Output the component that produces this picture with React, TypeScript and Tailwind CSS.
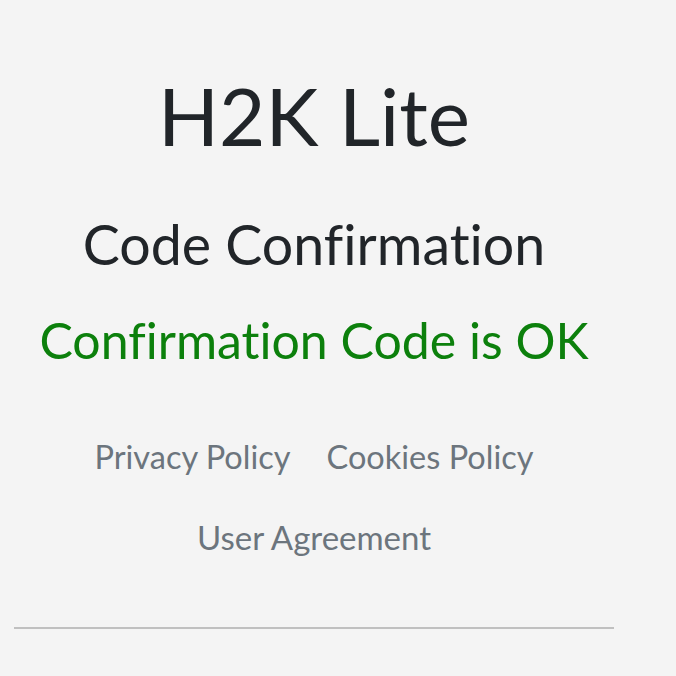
export default function App() {
  const font = { fontFamily: "Lato, 'Noto Sans', sans-serif" };
  return (
    <div className="min-h-[676px] w-full bg-[#f4f4f4] [font-variant-ligatures:none]" style={font}>
      <div className="ml-[14px] flex w-[600px] flex-col items-center pt-[67px]">
        <h1 className="text-[80px] leading-[96px] font-normal text-[#212529]">H2K Lite</h1>
        <h2 className="mt-[46px] text-[55.5px] leading-[70px] font-normal text-[#212529]">Code Confirmation</h2>
        <p className="mt-[33px] text-[50px] leading-[56px] text-[#0c800c]">Confirmation Code is OK</p>
        <div className="mt-[69px] flex gap-[36px] text-[32.5px] leading-[40px] text-[#6c757d]">
          <a>Privacy Policy</a>
          <a>Cookies Policy</a>
        </div>
        <a className="mt-[40px] text-[33px] leading-[40px] text-[#6c757d]">User Agreement</a>
        <div className="mt-[70px] h-[2px] w-full bg-[#c0c0c0]" />
      </div>
    </div>
  );
}
